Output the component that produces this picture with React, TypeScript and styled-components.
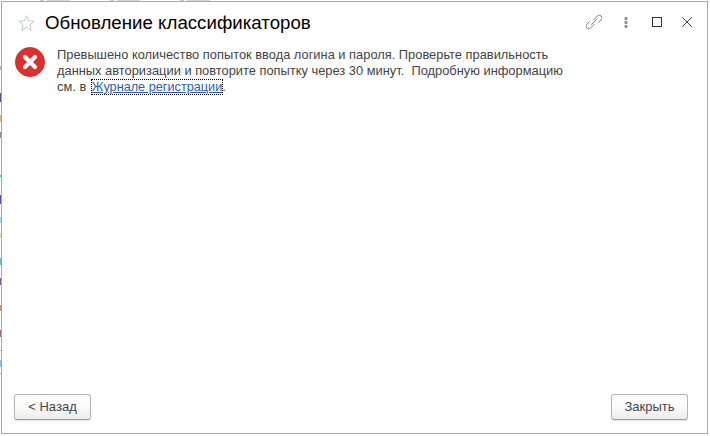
import React from "react";
import styled, { createGlobalStyle } from "styled-components";

const Global = createGlobalStyle`
  html, body { margin: 0; padding: 0; background: #fff; }
  body { width: 710px; height: 436px; overflow: hidden; font-family: "Liberation Sans", Arial, sans-serif; }
  #root { height: 100%; }
`;

const Backdrop = styled.div`
  width: 710px;
  height: 436px;
  padding: 1px 2px 2px 1px;
  box-sizing: border-box;
  background:
    repeating-linear-gradient(to right, #fff 0 40px, #c9c9c9 40px 44px, #fff 44px 47px, #d6d6d6 47px 70px) left top / 210px 1px no-repeat,
    linear-gradient(to bottom,
      #fff 0 66px, #d8b090 66px 70px, #fff 70px 93px, #4a4fb0 93px 102px, #fff 102px 115px, #d8b090 115px 122px, #fff 122px 132px,
      #9a7fa0 132px 138px, #fff 138px 175px, #40b8c8 175px 177px, #fff 177px 195px,
      #5050b0 195px 204px, #fff 204px 217px, #a8d0e8 217px 223px, #fff 223px 233px,
      #e8d8a0 233px 238px, #fff 238px 258px, #70b8c0 258px 265px, #fff 265px 278px,
      #806090 278px 285px, #fff 285px 305px, #d09070 305px 311px, #fff 311px 330px,
      #a07070 330px 337px, #fff 337px 350px, #b0b0b0 350px 351px, #fff 351px 360px,
      #90c0e0 360px 367px, #fff 367px 373px, #b0b0b0 373px 374px, #fff 374px) left top / 1px 100% no-repeat,
    #fff;
`;

const Window = styled.div`
  width: 100%;
  height: 100%;
  box-sizing: border-box;
  border: 1px solid #a8a8a8;
  background: #fff;
  display: flex;
  flex-direction: column;
`;

const Header = styled.header`
  display: flex;
  align-items: center;
  height: 44px;
  padding: 0 15px 0 16px;
  flex: none;
`;

const FavStar = styled.svg`
  width: 17px;
  height: 16px;
  flex: none;
  margin-right: 10px;
  margin-bottom: 2px;
`;

const Title = styled.h1`
  margin: 0 0 2px;
  font: 400 18.7px/22px "Liberation Sans", Arial, sans-serif;
  color: #000;
  flex: 1;
`;

const Tools = styled.div`
  display: flex;
  align-items: center;
  margin-bottom: 4px;
`;

const ToolIcon = styled.svg<{ $gap: number }>`
  display: block;
  flex: none;
  margin-left: ${(p) => p.$gap}px;
`;

const Body = styled.main`
  flex: 1;
  display: flex;
  align-items: flex-start;
  padding: 1px 0 0 13px;
`;

const ErrorIcon = styled.svg`
  width: 30px;
  height: 30px;
  flex: none;
  margin-right: 12px;
`;

const Message = styled.p`
  margin: 0;
  width: 560px;
  font: 400 12.87px/16px "Liberation Sans", Arial, sans-serif;
  color: #444;
  white-space: pre-wrap;
`;

const RegLink = styled.a`
  margin-left: 2px;
  font-size: 12.7px;
  color: #2a5fb8;
  text-decoration: underline;
  outline: 1px dotted #000;
  outline-offset: 0;
`;

const Footer = styled.footer`
  display: flex;
  justify-content: space-between;
  padding: 0 19px 13px 12px;
  flex: none;
`;

const Button = styled.button`
  width: 77px;
  height: 26px;
  box-sizing: border-box;
  border: 1px solid #b4b4b4;
  border-bottom-color: #9c9c9c;
  border-radius: 3px;
  background: linear-gradient(to bottom, #ffffff 0%, #fbfbfb 50%, #ececec 100%);
  box-shadow: 0 1px 1px rgba(0, 0, 0, 0.12);
  padding: 0;
  font: 400 13px/24px "Liberation Sans", Arial, sans-serif;
  color: #444;
`;

export default function App() {
  return (
    <>
      <Global />
      <Backdrop>
        <Window>
          <Header>
            <FavStar viewBox="0 0 17 16">
              <path
                d="M8.5 0.8 10.6 5.9 16.1 6.3 11.9 9.8 13.2 15.2 8.5 12.3 3.8 15.2 5.1 9.8 0.9 6.3 6.4 5.9Z"
                fill="#fff"
                stroke="#c4c8cc"
                strokeWidth="1"
              />
            </FavStar>
            <Title>Обновление классификаторов</Title>
            <Tools>
              <ToolIcon $gap={0} width="16" height="16" viewBox="0 0 16 16" fill="none" stroke="#808080" strokeWidth="1">
                <path d="M5.3 10.7 10.7 5.3" />
                <path d="M7.5 6 11.5 2a2.6 2.6 0 0 1 3.7 3.7L12.5 8.5" />
                <path d="M8.5 10 4.5 14a2.6 2.6 0 0 1-3.7-3.7L3.5 7.5" />
              </ToolIcon>
              <ToolIcon $gap={22} width="4" height="11" viewBox="0 0 4 11" fill="#8c8c8c">
                <rect x="0.5" y="0" width="3" height="3" rx="1" />
                <rect x="0.5" y="4" width="3" height="3" rx="1" />
                <rect x="0.5" y="8" width="3" height="3" rx="1" />
              </ToolIcon>
              <ToolIcon $gap={24} width="10" height="10" viewBox="0 0 10 10" fill="none" stroke="#333" strokeWidth="1">
                <rect x="0.5" y="0.5" width="9" height="9" />
              </ToolIcon>
              <ToolIcon $gap={20} width="10" height="10" viewBox="0 0 10 10" fill="none" stroke="#444" strokeWidth="1">
                <path d="M0.3 0.3 9.7 9.7M9.7 0.3 0.3 9.7" />
              </ToolIcon>
            </Tools>
          </Header>
          <Body>
            <ErrorIcon viewBox="0 0 30 30">
              <circle cx="15" cy="15" r="14.6" fill="#dc3030" stroke="#c42a2a" strokeWidth="0.8" />
              <path d="M10 10 20 20M20 10 10 20" stroke="#fff" strokeWidth="4.2" strokeLinecap="round" />
            </ErrorIcon>
            <Message>
              Превышено количество попыток ввода логина и пароля. Проверьте правильность
              {"\n"}данных авторизации и повторите попытку через 30 минут.  Подробную информацию
              {"\n"}см. в <RegLink href="#">Журнале регистрации</RegLink>.
            </Message>
          </Body>
          <Footer>
            <Button>&lt; Назад</Button>
            <Button>Закрыть</Button>
          </Footer>
        </Window>
      </Backdrop>
    </>
  );
}
